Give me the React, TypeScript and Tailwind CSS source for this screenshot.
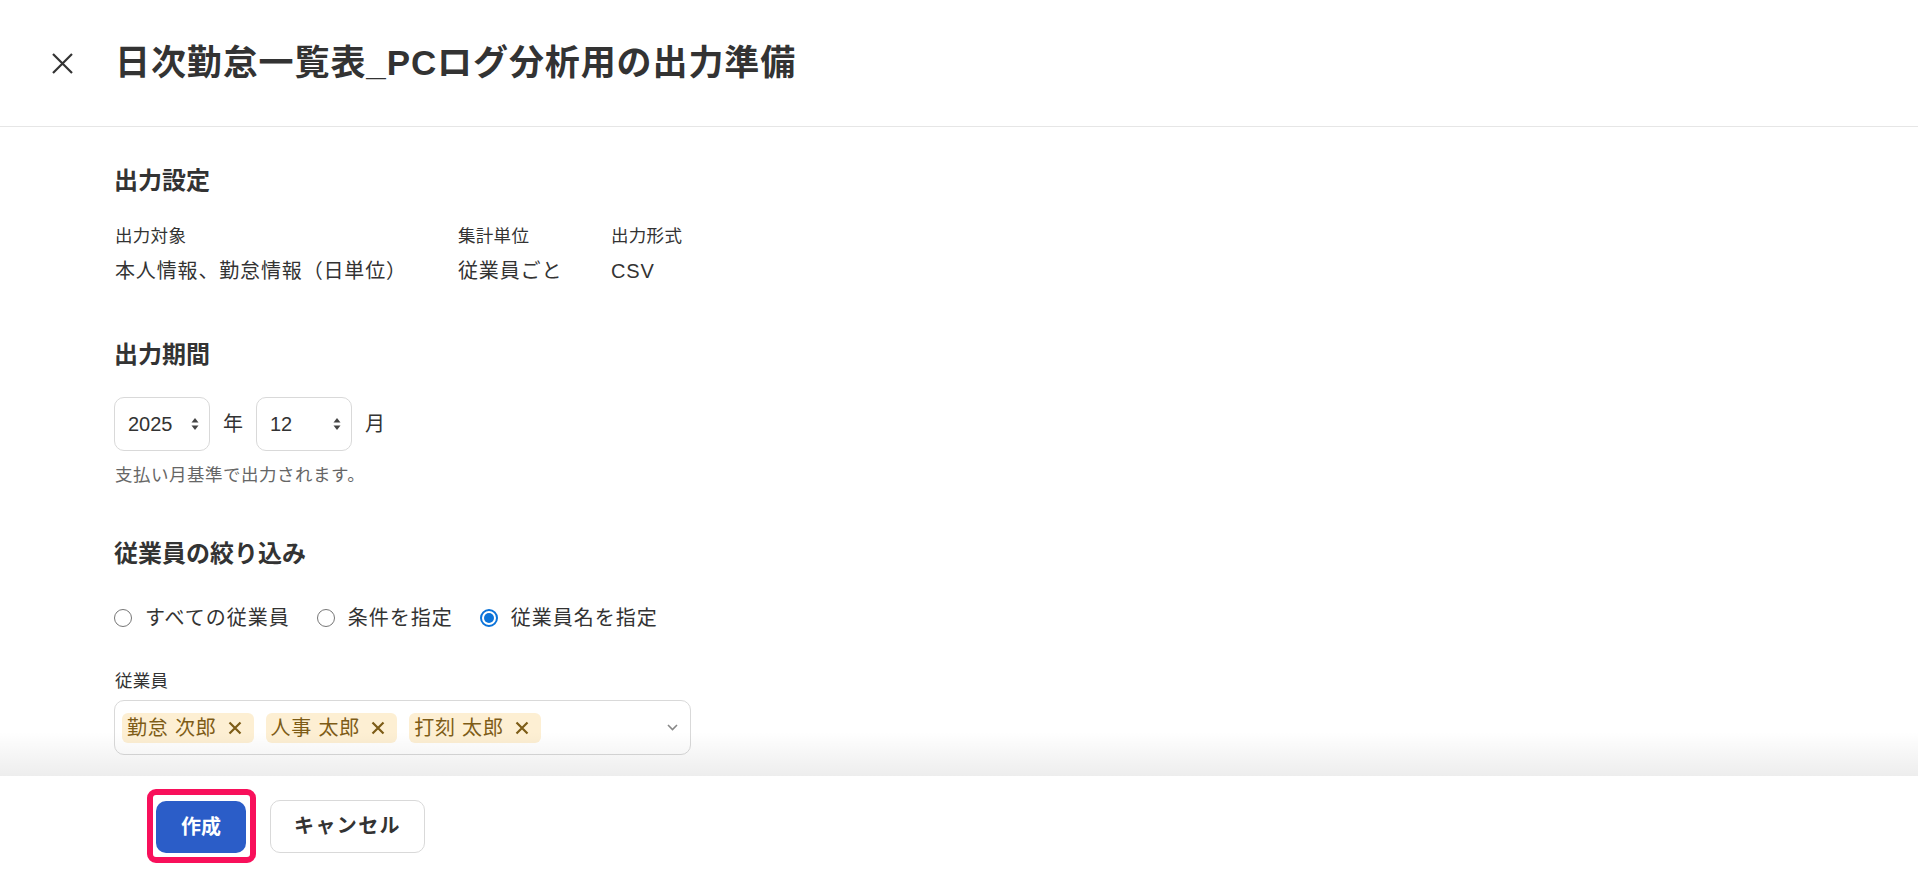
import React from "react";

const font = { fontFamily: '"Liberation Sans", "Noto Sans CJK JP", sans-serif' };

const Arrows = () => (
  <svg width="8" height="14" viewBox="0 0 8 14" className="text-[#444]">
    <path d="M4 1 L7.5 5.5 H0.5 Z" fill="currentColor" />
    <path d="M4 13 L7.5 8.5 H0.5 Z" fill="currentColor" />
  </svg>
);

const NumSelect = ({ value }: { value: string }) => (
  <div className="flex h-[54px] w-[96px] items-center justify-between rounded-[10px] border border-[#d9d9d9] bg-white pl-[13px] pr-[10px]">
    <span className="text-[20px] text-[#333]">{value}</span>
    <Arrows />
  </div>
);

const Radio = ({ label, checked }: { label: string; checked?: boolean }) => (
  <label className="flex items-center">
    {checked ? (
      <span className="flex h-[18px] w-[18px] items-center justify-center rounded-full border-2 border-[#0b73d9]">
        <span className="h-[10px] w-[10px] rounded-full bg-[#0b73d9]" />
      </span>
    ) : (
      <span className="h-[18px] w-[18px] rounded-full border-[1.5px] border-[#767676] bg-white" />
    )}
    <span className="ml-[13px] text-[20px] tracking-[1px] text-[#333]">{label}</span>
  </label>
);

const Chip = ({ name }: { name: string }) => (
  <span className="flex h-[30px] items-center rounded-[6px] bg-[#fdefd3] pl-[5px] pr-[12px] text-[20px] tracking-[0.8px] text-[#7d5c17]">
    {name}
    <svg width="14" height="14" viewBox="0 0 14 14" className="ml-[11px]">
      <path d="M1.5 1.5 L12.5 12.5 M12.5 1.5 L1.5 12.5" stroke="currentColor" strokeWidth="2.2" />
    </svg>
  </span>
);

const Info = ({ label, value }: { label: string; value: string }) => (
  <div>
    <div className="text-[17.5px] leading-[26px] tracking-[0.3px] text-[#333]">{label}</div>
    <div className="mt-[7px] text-[20px] leading-[30px] tracking-[0.85px] text-[#333]">{value}</div>
  </div>
);

export default function App() {
  return (
    <div className="flex h-screen flex-col bg-white text-[#333]" style={font}>
      <header className="flex h-[127px] shrink-0 items-center border-b border-[#e6e6e6]">
        <svg width="21" height="21" viewBox="0 0 21 21" className="ml-[52px] text-[#333]">
          <path d="M1 1 L20 20 M20 1 L1 20" stroke="currentColor" strokeWidth="2.2" />
        </svg>
        <h1 className="ml-[42px] text-[35px] font-bold tracking-[0.9px] text-[#333]">日次勤怠一覧表_PCログ分析用の出力準備</h1>
      </header>

      <main className="relative flex-1 overflow-hidden pl-[114px]">
        <h2 className="mt-[36px] text-[24px] font-bold leading-[36px]">出力設定</h2>
        <div className="mt-[24px] grid grid-cols-[343px_153px_auto] pl-[1px]">
          <Info label="出力対象" value="本人情報、勤怠情報（日単位）" />
          <Info label="集計単位" value="従業員ごと" />
          <Info label="出力形式" value="CSV" />
        </div>

        <h2 className="mt-[51px] text-[24px] font-bold leading-[36px]">出力期間</h2>
        <div className="mt-[24px] flex items-center gap-[13px]">
          <NumSelect value="2025" />
          <span className="text-[20px]">年</span>
          <NumSelect value="12" />
          <span className="text-[20px]">月</span>
        </div>
        <p className="mt-[11px] pl-[1px] text-[17.5px] leading-[26px] tracking-[0.5px] text-[#666]">支払い月基準で出力されます。</p>

        <h2 className="mt-[48px] text-[24px] font-bold leading-[36px]">従業員の絞り込み</h2>
        <div className="mt-[31px] flex h-[30px] items-center gap-[27px]">
          <Radio label="すべての従業員" />
          <Radio label="条件を指定" />
          <Radio label="従業員名を指定" checked />
        </div>

        <div className="mt-[35px] pl-[1px] text-[17.5px] leading-[26px] tracking-[0.3px]">従業員</div>
        <div className="mt-[6px] flex h-[55px] w-[577px] items-center rounded-[10px] border border-[#d9d9d9] bg-white pl-[7px] pr-[12px]">
          <div className="flex flex-1 items-center gap-[12px]">
            <Chip name="勤怠 次郎" />
            <Chip name="人事 太郎" />
            <Chip name="打刻 太郎" />
          </div>
          <svg width="11" height="7" viewBox="0 0 11 7" className="text-[#888]">
            <path d="M1 1 L5.5 5.5 L10 1" fill="none" stroke="currentColor" strokeWidth="1.6" />
          </svg>
        </div>

        <div className="pointer-events-none absolute bottom-0 left-0 right-0 h-[44px] bg-linear-to-b from-transparent to-black/[0.07]" />
      </main>

      <footer className="flex h-[100px] shrink-0 items-center bg-white pl-[147px]">
        <div className="rounded-[9px] border-[6px] border-[#f8105b] pb-[4px] pl-[3px] pr-[4px] pt-[6px]">
          <button className="flex h-[52px] w-[90px] items-center justify-center rounded-[10px] bg-[#2b5dc8] text-[20px] font-bold text-white">
            作成
          </button>
        </div>
        <button className="ml-[14px] flex h-[53px] w-[155px] items-center justify-center rounded-[10px] border border-[#d9d9d9] bg-white text-[20px] font-bold tracking-[1.4px] text-[#333]">
          キャンセル
        </button>
      </footer>
    </div>
  );
}
